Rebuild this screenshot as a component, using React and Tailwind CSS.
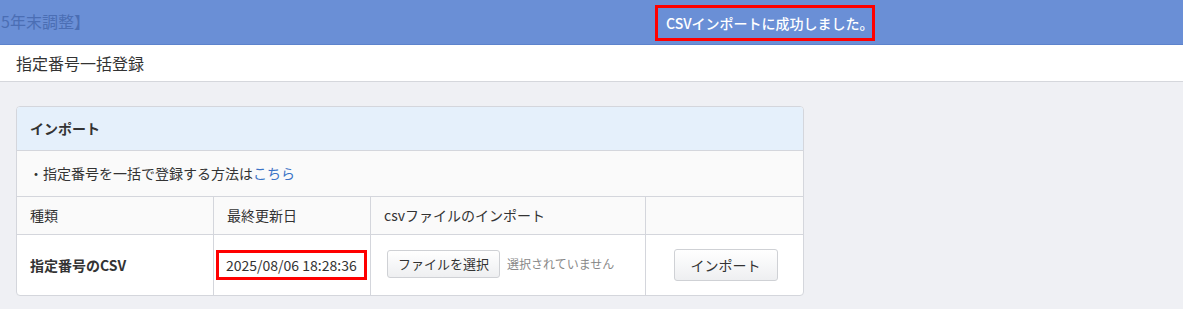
export default function App() {
  const font = { fontFamily: '"Noto Sans CJK JP", "Noto Sans", sans-serif' };

  return (
    <div className="w-[1183px] h-[309px] bg-[#eff0f4] text-[#333] text-[14px] overflow-hidden" style={font}>
      {/* top bar */}
      <div className="h-[45px] bg-[#6a8fd6] border-b border-[#5d83cc] flex items-center relative">
        <span className="text-[16px] text-[#4b6eb4] pl-[1px] pb-[3px]">5年末調整】</span>
        <div className="absolute left-[655px] top-[5px] w-[220px] h-[36px] border-[3px] border-[#ff0000] flex items-center pl-[8px]">
          <span className="text-white font-medium text-[14px] whitespace-nowrap">CSVインポートに成功しました。</span>
        </div>
      </div>

      {/* page title */}
      <div className="h-[37px] bg-white border-b border-[#d5d7dc] flex items-center px-4">
        <h1 className="text-[16px] leading-none">指定番号一括登録</h1>
      </div>

      <div className="pt-[24px] pl-4">
        <div className="w-[788px] bg-white border border-[#d4d6dc] rounded-[4px] overflow-hidden">
          <div className="h-[44px] bg-[#e5f0fb] border-b border-[#d4d6dc] flex items-center px-[13px] font-bold">
            インポート
          </div>
          <div className="h-[46px] bg-[#fafafa] border-b border-[#d4d6dc] flex items-center px-[12px]">
            ・指定番号を一括で登録する方法は<a className="text-[#3b73c6]">こちら</a>
          </div>
          <div className="grid grid-cols-[197px_157px_275px_1fr]">
            <div className="h-[38px] bg-[#fafafa] border-b border-r border-[#d4d6dc] flex items-center px-[13px]">種類</div>
            <div className="h-[38px] bg-[#fafafa] border-b border-r border-[#d4d6dc] flex items-center px-[13px]">最終更新日</div>
            <div className="h-[38px] bg-[#fafafa] border-b border-r border-[#d4d6dc] flex items-center px-[13px]">csvファイルのインポート</div>
            <div className="h-[38px] bg-[#fafafa] border-b border-[#d4d6dc]"></div>

            <div className="h-[60px] border-r border-[#d4d6dc] flex items-center px-[13px] font-bold">指定番号のCSV</div>
            <div className="h-[60px] border-r border-[#d4d6dc] flex items-center pl-[2px]">
              <span className="border-[3px] border-[#ff0000] px-[7px] h-[30px] flex items-center">2025/08/06 18:28:36</span>
            </div>
            <div className="h-[60px] border-r border-[#d4d6dc] flex items-center pl-[16px] gap-[7px] pb-[3px]">
              <button className="h-[28px] px-[10px] text-[13px] border border-[#cfd1d5] rounded-[3px] bg-gradient-to-b from-white to-[#eeeff1]">ファイルを選択</button>
              <span className="text-[12px] text-[#888]">選択されていません</span>
            </div>
            <div className="h-[60px] flex items-center justify-center pl-[2px]">
              <button className="h-[32px] w-[104px] text-[14px] border border-[#cfd1d5] rounded-[3px] bg-gradient-to-b from-white to-[#eeeff1]">インポート</button>
            </div>
          </div>
        </div>
      </div>
    </div>
  );
}
